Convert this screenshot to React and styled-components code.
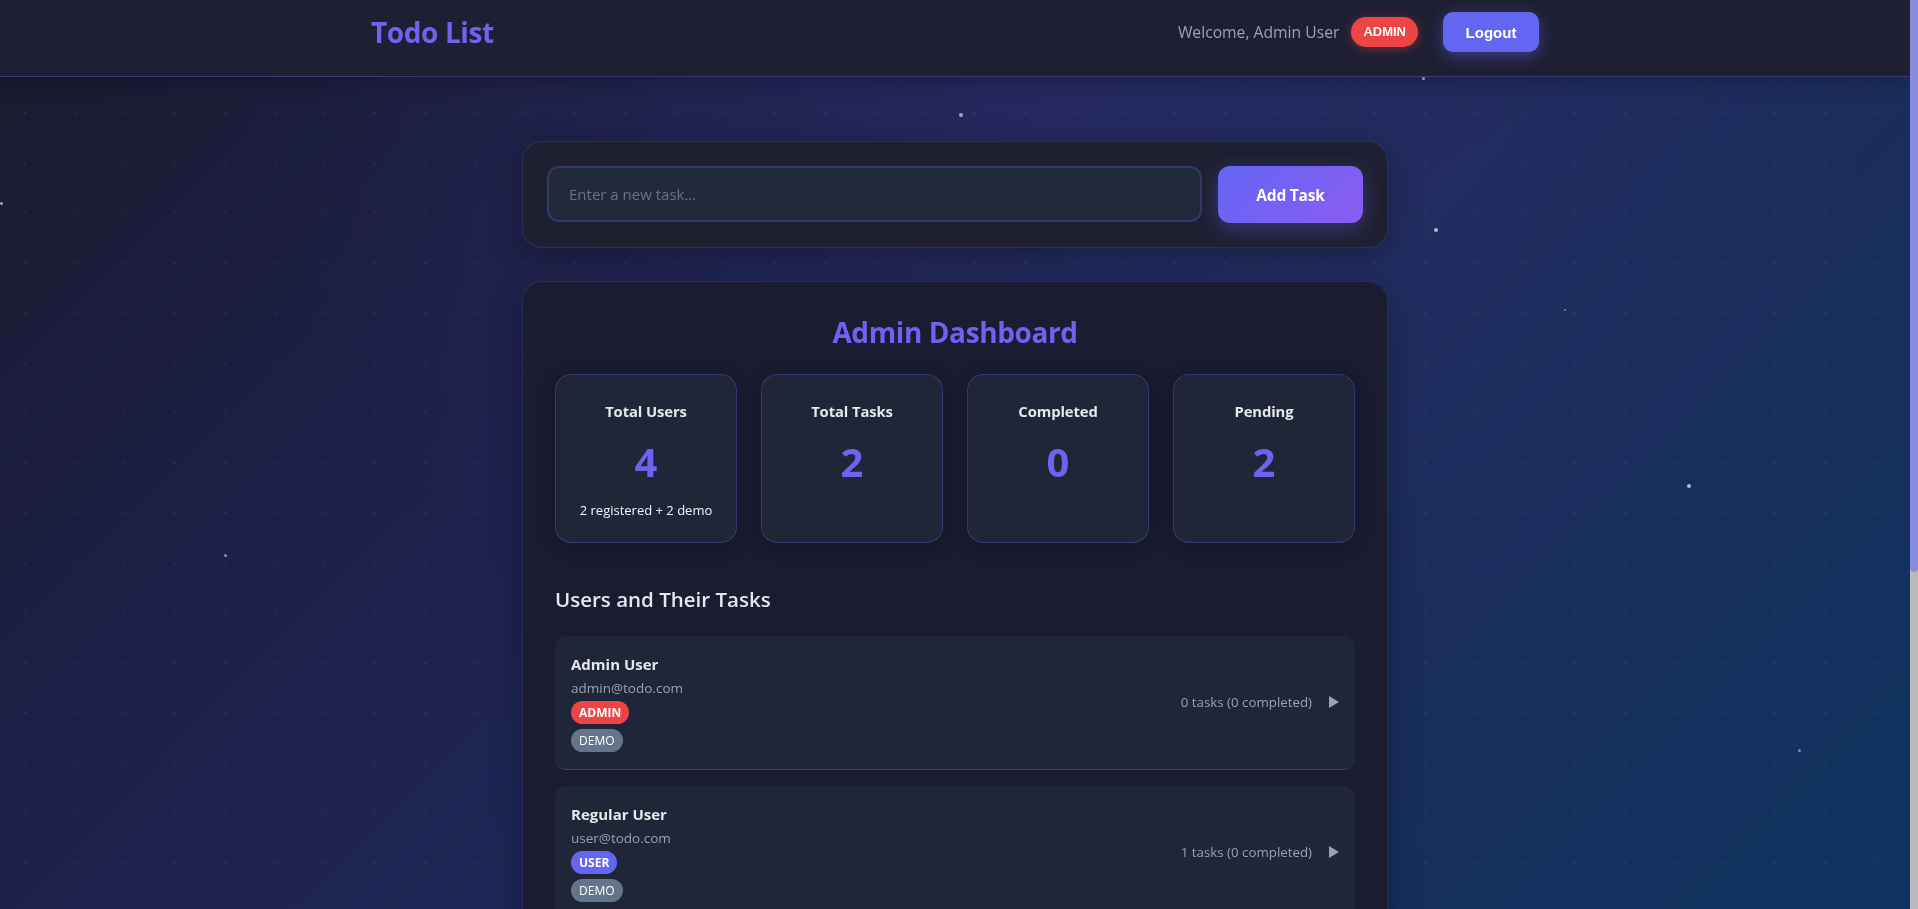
import React from 'react'
import styled, { createGlobalStyle } from 'styled-components'

const GlobalStyle = createGlobalStyle`
  html, body {
    margin: 0;
    padding: 0;
  }
  body {
    margin-right: 8px;
    font-family: "Segoe UI", "Open Sans", sans-serif;
    color: #e5e7eb;
    background: #1a1a2e;
  }
  * {
    box-sizing: border-box;
  }
`

const Backdrop = styled.div`
  position: fixed;
  inset: 0;
  z-index: 0;
  pointer-events: none;
  background:
    radial-gradient(circle, rgba(120, 125, 235, 0.13) 1px, transparent 1.6px) 0 -12px / 50px 50px,
    radial-gradient(ellipse at 55% 10%, rgba(70, 70, 170, 0.16), transparent 55%),
    linear-gradient(135deg, #1a1a2e 0%, #1e2250 38%, #1e2a5a 58%, #0f3460 100%);
`

const Star = styled.span`
  position: absolute;
  left: ${props => props.x}px;
  top: ${props => props.y}px;
  width: ${props => props.size}px;
  height: ${props => props.size}px;
  border-radius: 50%;
  background: rgba(215, 220, 240, ${props => props.glow});
`

/* page scrollbar, drawn since the capture hides native ones */
const ScrollTrack = styled.div`
  position: fixed;
  top: 0;
  right: 0;
  width: 8px;
  height: 100vh;
  z-index: 5;
  background: #b9b9be;
`

const ScrollThumb = styled.div`
  height: 572px;
  border-radius: 0 0 4px 4px;
  background: #8a8ce0;
`

const Header = styled.header`
  position: relative;
  z-index: 2;
  background: #1f1f33;
  border-bottom: 1px solid rgba(99, 102, 241, 0.35);
  box-shadow: 0 4px 20px rgba(0, 0, 0, 0.25);
`

const HeaderInner = styled.div`
  max-width: 1200px;
  height: 76px;
  margin: 0 auto;
  padding: 12px 16px 24px;
  display: flex;
  align-items: center;
  justify-content: space-between;
`

const Logo = styled.h1`
  margin: 0;
  font-size: 28px;
  font-weight: 700;
  letter-spacing: -0.4px;
  line-height: 40px;
  color: #7061f0;
`

const UserInfo = styled.div`
  display: flex;
  align-items: center;
`

const Welcome = styled.span`
  font-size: 15.7px;
  font-weight: 500;
  color: #9ca3af;
`

const HeaderBadge = styled.span`
  margin-left: 12px;
  padding: 0 12px;
  height: 30px;
  line-height: 30px;
  border-radius: 15px;
  background: #ef4444;
  color: #fff;
  font-family: "Liberation Sans", Arial, sans-serif;
  font-size: 13px;
  font-weight: 700;
  box-shadow: 0 2px 10px rgba(239, 68, 68, 0.4);
`

const LogoutButton = styled.button`
  margin-left: 25px;
  width: 96px;
  height: 40px;
  border: none;
  border-radius: 10px;
  background: #6366f1;
  color: #fff;
  font-family: "Liberation Sans", Arial, sans-serif;
  font-size: 15px;
  font-weight: 700;
  box-shadow: 0 4px 15px rgba(99, 102, 241, 0.45);
  cursor: pointer;
`

const Main = styled.main`
  position: relative;
  z-index: 1;
  width: 866px;
  margin: 0 auto;
  padding: 64px 0 48px;
  display: flex;
  flex-direction: column;
  gap: 33px;
`

const Card = styled.section`
  background: ${props => props.dark ? '#1b1b31' : '#1f1f32'};
  border: 1px solid rgba(99, 102, 241, 0.22);
  border-radius: 20px;
  padding: ${props => props.pad}px;
  box-shadow: 0 8px 32px rgba(0, 0, 0, 0.3);
`

const AddForm = styled.form`
  display: flex;
  gap: 16px;
`

const TaskInput = styled.input`
  flex: 1;
  height: 56px;
  padding: 0 20px;
  background: #212a3b;
  border: 2px solid rgba(99, 102, 241, 0.25);
  border-radius: 12px;
  color: #e5e7eb;
  font-family: inherit;
  font-size: 15px;
  outline: none;
  &::placeholder {
    color: #6b7280;
  }
`

const AddButton = styled.button`
  width: 145px;
  height: 57px;
  border: none;
  border-radius: 12px;
  background: linear-gradient(135deg, #6366f1, #8b5cf6);
  color: #fff;
  font-family: inherit;
  font-size: 15.5px;
  font-weight: 700;
  letter-spacing: -0.2px;
  box-shadow: 0 6px 20px rgba(99, 102, 241, 0.35);
  cursor: pointer;
`

const DashTitle = styled.h2`
  margin: 0 0 24px;
  text-align: center;
  font-size: 28px;
  line-height: 36px;
  font-weight: 700;
  letter-spacing: -0.4px;
  color: #7061f0;
`

const StatsGrid = styled.div`
  display: grid;
  grid-template-columns: repeat(4, 1fr);
  gap: 24px;
  margin-bottom: 42px;
`

const StatCard = styled.div`
  height: 169px;
  padding: 25px 12px;
  background: #1f2637;
  border: 1px solid rgba(99, 102, 241, 0.3);
  border-radius: 16px;
  text-align: center;
  box-shadow: 0 4px 20px rgba(0, 0, 0, 0.2);
`

const StatLabel = styled.h3`
  margin: 0;
  font-size: 14.8px;
  line-height: 22px;
  font-weight: 700;
  letter-spacing: -0.1px;
  color: #e5e7eb;
`

const StatNumber = styled.div`
  margin-top: 16px;
  font-size: 40px;
  line-height: 48px;
  font-weight: 700;
  color: #7061f0;
`

const StatNote = styled.p`
  margin: 14px 0 0;
  font-size: 13px;
  line-height: 20px;
  color: #f1f5f9;
`

const SectionTitle = styled.h3`
  margin: 0 0 23px;
  font-size: 20.5px;
  line-height: 28px;
  font-weight: 600;
  color: #e5e7eb;
`

const UserList = styled.div`
  display: flex;
  flex-direction: column;
  gap: 16px;
`

const UserRow = styled.div`
  display: flex;
  align-items: center;
  justify-content: space-between;
  padding: 16px 16px 17px;
  background: #1f2637;
  border-radius: 12px;
  border-bottom: 1px solid rgba(70, 90, 170, 0.55);
`

const UserDetails = styled.div`
  display: flex;
  flex-direction: column;
  align-items: flex-start;
`

const UserName = styled.div`
  font-size: 15px;
  line-height: 24px;
  font-weight: 700;
  color: #e5e7eb;
`

const UserEmail = styled.div`
  margin-top: 2px;
  font-size: 13.5px;
  line-height: 20px;
  color: #94a3b8;
`

const Badges = styled.div`
  margin-top: 3px;
  display: flex;
  flex-direction: column;
  align-items: flex-start;
  gap: 5px;
`

const badgeColors = {
  admin: '#ef4444',
  user: '#6366f1',
  demo: '#64748b',
}

const RoleBadge = styled.span`
  height: 23px;
  padding: 0 8px;
  line-height: 23px;
  border-radius: 12px;
  background: ${props => badgeColors[props.kind]};
  color: #fff;
  font-size: 12px;
  font-weight: ${props => props.kind === 'demo' ? 500 : 700};
`

const TaskSummary = styled.div`
  display: flex;
  align-items: center;
  gap: 17px;
  font-size: 13.3px;
  color: #94a3b8;
`

const EmptyState = styled.p`
  margin: 0;
  padding: 24px 0 8px;
  text-align: center;
  font-size: 15px;
  color: #94a3b8;
`

const stars = [
  { x: 0, y: 202, size: 3, glow: 0.7 },
  { x: 224, y: 554, size: 3, glow: 0.6 },
  { x: 959, y: 113, size: 4, glow: 0.7 },
  { x: 1422, y: 77, size: 3, glow: 0.8 },
  { x: 1434, y: 228, size: 4, glow: 0.8 },
  { x: 1564, y: 309, size: 2, glow: 0.5 },
  { x: 1687, y: 484, size: 4, glow: 0.8 },
  { x: 1798, y: 749, size: 3, glow: 0.55 },
]

const users = [
  { name: 'Admin User', email: 'admin@todo.com', role: 'admin', demo: true, tasks: 0, done: 0 },
  { name: 'Regular User', email: 'user@todo.com', role: 'user', demo: true, tasks: 1, done: 0 },
  { name: 'John Carter', email: 'john@example.com', role: 'user', demo: false, tasks: 1, done: 0 },
  { name: 'Maria Lopez', email: 'maria@example.com', role: 'user', demo: false, tasks: 0, done: 0 },
]

function Arrow() {
  return (
    <svg width="10" height="12" viewBox="0 0 10 12">
      <polygon points="0,0 10,6 0,12" fill="#94a3b8" />
    </svg>
  )
}

export default function App() {
  return (
    <>
      <GlobalStyle />
      <Backdrop>
        {stars.map((s, i) => <Star key={i} {...s} />)}
      </Backdrop>
      <ScrollTrack>
        <ScrollThumb />
      </ScrollTrack>
      <Header>
        <HeaderInner>
          <Logo>Todo List</Logo>
          <UserInfo>
            <Welcome>Welcome, Admin User</Welcome>
            <HeaderBadge>ADMIN</HeaderBadge>
            <LogoutButton>Logout</LogoutButton>
          </UserInfo>
        </HeaderInner>
      </Header>
      <Main>
        <Card pad={24}>
          <AddForm onSubmit={e => e.preventDefault()}>
            <TaskInput placeholder="Enter a new task..." />
            <AddButton type="submit">Add Task</AddButton>
          </AddForm>
        </Card>
        <Card pad={32} dark>
          <DashTitle>Admin Dashboard</DashTitle>
          <StatsGrid>
            <StatCard>
              <StatLabel>Total Users</StatLabel>
              <StatNumber>4</StatNumber>
              <StatNote>2 registered + 2 demo</StatNote>
            </StatCard>
            <StatCard>
              <StatLabel>Total Tasks</StatLabel>
              <StatNumber>2</StatNumber>
            </StatCard>
            <StatCard>
              <StatLabel>Completed</StatLabel>
              <StatNumber>0</StatNumber>
            </StatCard>
            <StatCard>
              <StatLabel>Pending</StatLabel>
              <StatNumber>2</StatNumber>
            </StatCard>
          </StatsGrid>
          <SectionTitle>Users and Their Tasks</SectionTitle>
          <UserList>
            {users.map(u => (
              <UserRow key={u.email}>
                <UserDetails>
                  <UserName>{u.name}</UserName>
                  <UserEmail>{u.email}</UserEmail>
                  <Badges>
                    <RoleBadge kind={u.role}>{u.role.toUpperCase()}</RoleBadge>
                    {u.demo && <RoleBadge kind="demo">DEMO</RoleBadge>}
                  </Badges>
                </UserDetails>
                <TaskSummary>
                  <span>{u.tasks} tasks ({u.done} completed)</span>
                  <Arrow />
                </TaskSummary>
              </UserRow>
            ))}
          </UserList>
        </Card>
        <Card pad={32}>
          <SectionTitle>Your Tasks</SectionTitle>
          <EmptyState>No tasks yet. Add one above!</EmptyState>
        </Card>
      </Main>
    </>
  )
}
